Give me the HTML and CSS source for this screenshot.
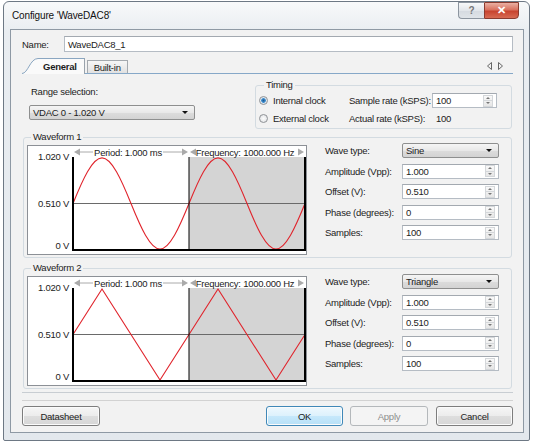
FILE: index.html
```html
<!DOCTYPE html>
<html lang="en">
<head>
  <meta charset="UTF-8">
  <title>Configure 'WaveDAC8'</title>
  <link rel="stylesheet" href="styles.css">
</head>
<body>
  <div class="window">
    <div class="titlebar">
      <span class="title">Configure 'WaveDAC8'</span>
      <div class="caption-btns">
        <span class="cap-help">?</span>
        <span class="cap-close">&#x2715;</span>
      </div>
    </div>

    <div class="client">
      <div class="name-row">
        <span class="name-label">Name:</span>
        <div class="textbox">WaveDAC8_1</div>
      </div>

      <div class="tabstrip">
        <div class="tab active">
          <svg class="tab-curve" width="16" height="16" viewBox="0 0 16 16">
            <path d="M0,15.5 C6,15.5 8,0.5 16,0.5 V16 H0 Z" fill="#fafafa"/>
            <path d="M0,15.5 C6,15.5 8,0.5 16,0.5" fill="none" stroke="#8aa6c1"/>
          </svg>
          <span class="tab-label">General</span>
        </div>
        <div class="tab">
          <span class="tab-label">Built-in</span>
        </div>
        <div class="tab-scroll">
          <svg width="18" height="8" viewBox="0 0 18 8">
            <path d="M5.5,0.5 L1.5,4 L5.5,7.5 Z" fill="none" stroke="#666"/>
            <path d="M12.5,0.5 L16.5,4 L12.5,7.5 Z" fill="none" stroke="#666"/>
          </svg>
        </div>
      </div>

      <div class="tab-page">
        <div class="top-row">
          <div class="range">
            <div class="range-label">Range selection:</div>
            <div class="combo range-combo">VDAC 0 - 1.020 V</div>
          </div>
          <fieldset class="group timing">
            <legend>Timing</legend>
            <div class="timing-grid">
              <div class="radio-item"><span class="radio on"></span>Internal clock</div>
              <div class="lbl">Sample rate (kSPS):</div>
              <div class="textbox spin"><span class="val">100</span><span class="arrows"><i></i><i></i></span></div>
              <div class="radio-item"><span class="radio"></span>External clock</div>
              <div class="lbl">Actual rate (kSPS):</div>
              <div class="plain-val">100</div>
            </div>
          </fieldset>
        </div>

        <fieldset class="group wave">
          <legend>Waveform 1</legend>
          <div class="wave-body">
            <svg class="graph" width="280" height="110" viewBox="0 0 280 110">
              <rect x="0.5" y="0.5" width="279" height="109" fill="#fff" stroke="#8c9096"/>
              <rect x="162" y="12" width="116" height="93" fill="#d4d4d4"/>
              <line x1="46" y1="58.5" x2="278" y2="58.5" stroke="#6a6a6a"/>
              <path d="M46,58.5 C55.67,34.63 65.33,12.9 75,12.9 C84.67,12.9 94.33,34.63 104,58.5 C113.67,82.37 123.33,104.1 133,104.1 C142.67,104.1 152.33,82.37 162,58.5 C171.67,34.63 181.33,12.9 191,12.9 C200.67,12.9 210.33,34.63 220,58.5 C229.67,82.37 239.33,104.1 249,104.1 C258.67,104.1 268.33,82.37 278,58.5" fill="none" stroke="#e0242c" stroke-width="1.1"/>
              <path d="M46,12 V105 H278 V12" fill="none" stroke="#000" stroke-width="2"/>
              <line x1="162" y1="12" x2="162" y2="105" stroke="#000"/>
              <polygon points="47,7 53,3.5 53,10.5" fill="#aaa"/>
              <line x1="53" y1="7" x2="66" y2="7" stroke="#aaa"/>
              <text class="hdr" x="101" y="10.5" text-anchor="middle">Period: 1.000 ms</text>
              <line x1="136" y1="7" x2="155" y2="7" stroke="#aaa"/>
              <polygon points="161,7 155,3.5 155,10.5" fill="#aaa"/>
              <polygon points="163,7 169,3.5 169,10.5" fill="#aaa"/>
              <text class="hdr" x="218" y="10.5" text-anchor="middle">Frequency: 1000.000 Hz</text>
              <polygon points="277,7 271,3.5 271,10.5" fill="#aaa"/>
              <text class="axis" x="42" y="15" text-anchor="end">1.020 V</text>
              <text class="axis" x="42" y="62" text-anchor="end">0.510 V</text>
              <text class="axis" x="42" y="103.5" text-anchor="end">0 V</text>
            </svg>
            <div class="params">
              <div class="lbl">Wave type:</div>
              <div class="combo">Sine</div>
              <div class="lbl">Amplitude (Vpp):</div>
              <div class="textbox spin"><span class="val">1.000</span><span class="arrows"><i></i><i></i></span></div>
              <div class="lbl">Offset (V):</div>
              <div class="textbox spin"><span class="val">0.510</span><span class="arrows"><i></i><i></i></span></div>
              <div class="lbl">Phase (degrees):</div>
              <div class="textbox spin"><span class="val">0</span><span class="arrows"><i></i><i></i></span></div>
              <div class="lbl">Samples:</div>
              <div class="textbox spin"><span class="val">100</span><span class="arrows"><i></i><i></i></span></div>
            </div>
          </div>
        </fieldset>

        <fieldset class="group wave wave2">
          <legend>Waveform 2</legend>
          <div class="wave-body">
            <svg class="graph" width="280" height="110" viewBox="0 0 280 110">
              <rect x="0.5" y="0.5" width="279" height="109" fill="#fff" stroke="#8c9096"/>
              <rect x="162" y="12" width="116" height="93" fill="#d4d4d4"/>
              <line x1="46" y1="58.5" x2="278" y2="58.5" stroke="#6a6a6a"/>
              <path d="M46,58.5 L75,12.9 L133,104.1 L191,12.9 L249,104.1 L278,58.5" fill="none" stroke="#e0242c" stroke-width="1.1"/>
              <path d="M46,12 V105 H278 V12" fill="none" stroke="#000" stroke-width="2"/>
              <line x1="162" y1="12" x2="162" y2="105" stroke="#000"/>
              <polygon points="47,7 53,3.5 53,10.5" fill="#aaa"/>
              <line x1="53" y1="7" x2="66" y2="7" stroke="#aaa"/>
              <text class="hdr" x="101" y="10.5" text-anchor="middle">Period: 1.000 ms</text>
              <line x1="136" y1="7" x2="155" y2="7" stroke="#aaa"/>
              <polygon points="161,7 155,3.5 155,10.5" fill="#aaa"/>
              <polygon points="163,7 169,3.5 169,10.5" fill="#aaa"/>
              <text class="hdr" x="218" y="10.5" text-anchor="middle">Frequency: 1000.000 Hz</text>
              <polygon points="277,7 271,3.5 271,10.5" fill="#aaa"/>
              <text class="axis" x="42" y="15" text-anchor="end">1.020 V</text>
              <text class="axis" x="42" y="62" text-anchor="end">0.510 V</text>
              <text class="axis" x="42" y="103.5" text-anchor="end">0 V</text>
            </svg>
            <div class="params">
              <div class="lbl">Wave type:</div>
              <div class="combo">Triangle</div>
              <div class="lbl">Amplitude (Vpp):</div>
              <div class="textbox spin"><span class="val">1.000</span><span class="arrows"><i></i><i></i></span></div>
              <div class="lbl">Offset (V):</div>
              <div class="textbox spin"><span class="val">0.510</span><span class="arrows"><i></i><i></i></span></div>
              <div class="lbl">Phase (degrees):</div>
              <div class="textbox spin"><span class="val">0</span><span class="arrows"><i></i><i></i></span></div>
              <div class="lbl">Samples:</div>
              <div class="textbox spin"><span class="val">100</span><span class="arrows"><i></i><i></i></span></div>
            </div>
          </div>
        </fieldset>
      </div>

      <div class="footer">
        <button class="btn">Datasheet</button>
        <button class="btn btn-ok">OK</button>
        <button class="btn btn-apply" disabled>Apply</button>
        <button class="btn btn-cancel">Cancel</button>
      </div>
    </div>
  </div>
</body>
</html>
```

FILE: styles.css
```css
* {
  margin: 0;
  padding: 0;
  box-sizing: border-box;
}

body {
  background: #fff;
  font-family: "Liberation Sans", Arial, sans-serif;
  font-size: 9.5px;
  letter-spacing: -0.25px;
  color: #1c1c1c;
  white-space: nowrap;
}

.window {
  width: 527px;
  height: 440px;
  margin: 1px 0 0 3px;
  border: 1px solid #6d7884;
  border-radius: 6px 6px 2px 2px;
  background: linear-gradient(to bottom, #f8f9fa 0, #e9edf1 30px, #e3e8ed);
  padding: 0 5px 7px 6px;
  display: flex;
  flex-direction: column;
}

/* title bar */

.titlebar {
  height: 27px;
  display: flex;
  align-items: flex-start;
}

.title {
  padding: 8px 0 0 2px;
  font-size: 10px;
  letter-spacing: -0.15px;
  line-height: 12px;
  color: #111;
}

.caption-btns {
  margin-left: auto;
  margin-right: 5px;
  display: flex;
}

.cap-help,
.cap-close {
  height: 17px;
  display: flex;
  align-items: center;
  justify-content: center;
  font-weight: bold;
  letter-spacing: 0;
}

.cap-help {
  width: 26px;
  border: 1px solid #8c959f;
  border-right: none;
  border-radius: 0 0 0 4px;
  background: linear-gradient(to bottom, #f7f8f9, #e2e6ea 50%, #d5dae0 51%, #dfe4e8);
  color: #777;
  font-size: 10px;
}

.cap-close {
  width: 35px;
  border: 1px solid #8a3b2f;
  border-radius: 0 0 4px 0;
  background: linear-gradient(to bottom, #eab0a3, #d9725f 45%, #c8442f 55%, #d76a52);
  color: #fff;
  font-size: 11px;
}

/* client area */

.client {
  flex: 1;
  border: 1px solid #8e99a4;
  background: #f2f2f2;
  padding: 6px 10px 0 11px;
  display: flex;
  flex-direction: column;
}

.name-row {
  display: flex;
  align-items: center;
  height: 16px;
}

.name-label {
  width: 42px;
}

.textbox {
  height: 15px;
  border: 1px solid #b5bcc4;
  border-top-color: #a3a9b0;
  background: #fff;
  display: flex;
  align-items: center;
  padding-left: 3px;
}

.name-row .textbox {
  flex: 1;
  height: 16px;
}

/* tabs */

.tabstrip {
  margin-top: 6px;
  height: 16px;
  display: flex;
  align-items: flex-end;
  border-bottom: 1px solid #86a8c8;
}

.tab {
  display: flex;
  align-items: flex-end;
  height: 13px;
  margin-left: 2px;
}

.tab .tab-label {
  height: 100%;
  padding: 0 6px;
  display: flex;
  align-items: center;
  border: 1px solid #a4a9ae;
  border-bottom: none;
  background: linear-gradient(to bottom, #f6f6f6, #e1e1e1);
}

.tab.active {
  height: 16px;
  margin: 0 0 -1px 0;
}

.tab.active .tab-label {
  border-left: none;
  border-color: #8aa6c1 #9aa3ac #fafafa;
  background: #fafafa;
  font-weight: bold;
  padding: 0 7px 0 5px;
}

.tab-curve {
  display: block;
}

.tab-scroll {
  margin-left: auto;
  margin-right: 9px;
  align-self: center;
  display: flex;
}

/* tab page */

.tab-page {
  padding: 0 1px 3px;
  border-bottom: 1px solid #c8cdd2;
}

.top-row {
  display: flex;
}

.range {
  width: 232px;
  padding-left: 6px;
}

.range-label {
  margin-top: 12px;
  line-height: 12px;
  padding-left: 2px;
}

.range-combo {
  margin-top: 7px;
  width: 166px;
}

.combo {
  height: 15px;
  border: 1px solid #8e8f8f;
  border-radius: 2px;
  background: linear-gradient(to bottom, #f5f5f5, #e8e8e8 50%, #dcdcdc 51%, #d3d3d3);
  display: flex;
  align-items: center;
  padding-left: 3px;
}

.combo::after {
  content: "";
  margin-left: auto;
  margin-right: 6px;
  border-left: 3px solid transparent;
  border-right: 3px solid transparent;
  border-top: 3px solid #111;
}

/* group boxes */

.group {
  border: 1px solid #d3dbe1;
  border-radius: 3px;
  min-width: 0;
}

.group legend {
  margin-left: 5px;
  padding: 0 2px;
  line-height: 12px;
}

.timing {
  flex: 1;
  margin-top: 5px;
  height: 50px;
  padding: 2px 0 0 3px;
}

.timing-grid {
  display: grid;
  grid-template-columns: 90px 83px 65px;
  grid-auto-rows: 15px;
  row-gap: 3px;
  align-items: center;
}

.radio-item {
  display: flex;
  align-items: center;
  gap: 5px;
}

.radio {
  width: 9px;
  height: 9px;
  border-radius: 50%;
  border: 1px solid #8f9296;
  background: radial-gradient(circle, #fdfdfd, #dcdfe2);
}

.radio.on {
  background: radial-gradient(circle, #1c5a94 0, #3f8fd0 2px, #dbe4ec 2.6px, #f4f6f8);
}

.plain-val {
  padding-left: 4px;
}

.spin .val {
  flex: 1;
}

.spin .arrows {
  width: 10px;
  height: 12px;
  margin-right: 3px;
  display: flex;
  flex-direction: column;
  border: 1px solid #d4d7da;
  background: linear-gradient(to bottom, #f9f9f9, #e6e6e6);
}

.spin .arrows i {
  flex: 1;
  display: flex;
  align-items: center;
  justify-content: center;
}

.spin .arrows i + i {
  border-top: 1px solid #d4d7da;
}

.spin .arrows i::before {
  content: "";
  border-left: 2px solid transparent;
  border-right: 2px solid transparent;
  border-bottom: 2px solid #777;
}

.spin .arrows i + i::before {
  border-bottom: none;
  border-top: 2px solid #777;
}

/* waveforms */

.wave {
  margin-top: 2px;
  padding: 0 0 2px 2px;
}

.wave2 {
  margin-top: 4px;
}

.wave-body {
  display: flex;
  align-items: flex-start;
}

.graph {
  display: block;
  margin: 2px 0 0 1px;
}

.graph text {
  font-family: "Liberation Sans", Arial, sans-serif;
  font-size: 9.5px;
  letter-spacing: -0.25px;
  fill: #222;
}

.params {
  margin-left: 18px;
  display: grid;
  grid-template-columns: 77px 97px;
  grid-auto-rows: 15px;
  row-gap: 5.5px;
  align-items: center;
}

/* footer buttons */

.footer {
  margin-top: auto;
  border-top: 1px solid #d2d2d2;
  padding: 5px 0 6px;
  display: flex;
}

.btn {
  width: 78px;
  height: 20px;
  font: inherit;
  letter-spacing: inherit;
  color: #1c1c1c;
  border: 1px solid #7d7d7d;
  border-radius: 3px;
  background: linear-gradient(to bottom, #f6f6f6, #ececec 50%, #dedede 51%, #d6d6d6);
  box-shadow: inset 0 0 0 1px #fbfbfb;
}

.btn-ok {
  margin-left: auto;
  width: 77px;
  border-color: #3f88b8;
  background: linear-gradient(to bottom, #eef8fe, #dcf1fc 50%, #c6e8fb 51%, #b6e0f7);
}

.btn-apply {
  margin-left: 7px;
  color: #8d8d8d;
  border-color: #b4b8bb;
  background: #f4f4f4;
  box-shadow: none;
}

.btn-cancel {
  margin-left: 8px;
  width: 77px;
}
```
